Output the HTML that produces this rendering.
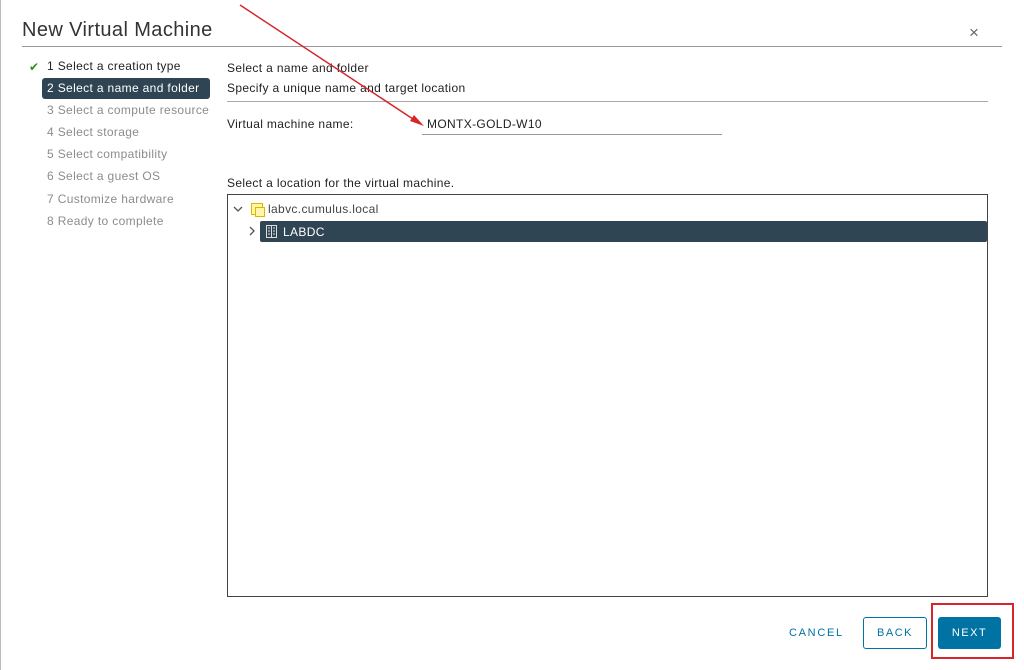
<!DOCTYPE html>
<html><head><style>
body{margin:0;width:1024px;height:670px;background:#fff;font-family:"Liberation Sans",sans-serif;position:relative;overflow:hidden;color:#333}
.a{position:absolute;white-space:nowrap}
.t{font-size:12px;letter-spacing:0.35px}
.s{font-size:12px;letter-spacing:0.35px;color:#8c8c8c;left:47px}
</style></head><body>
<div class="a" style="left:0;top:0;width:1px;height:670px;background:#bbb"></div>
<div class="a" style="left:22px;top:19px;font-size:20px;letter-spacing:0.4px;color:#333">New Virtual Machine</div>
<div class="a" style="left:969px;top:23px;font-size:17px;color:#666">×</div>
<div class="a" style="left:22px;top:46px;width:980px;height:1px;background:#999"></div>
<div class="a" style="left:29px;top:60px;font-size:12px;color:#2f8f1a">✔</div>
<div class="a t" style="left:47px;top:59px;color:#222">1 Select a creation type</div>
<div class="a" style="left:42px;top:78px;width:168px;height:21px;background:#2f4553;border-radius:3px"></div>
<div class="a t" style="left:47px;top:81px;color:#fff">2 Select a name and folder</div>
<div class="a s" style="top:103px">3 Select a compute resource</div>
<div class="a s" style="top:125px">4 Select storage</div>
<div class="a s" style="top:147px">5 Select compatibility</div>
<div class="a s" style="top:169px">6 Select a guest OS</div>
<div class="a s" style="top:192px">7 Customize hardware</div>
<div class="a s" style="top:214px">8 Ready to complete</div>
<div class="a t" style="left:227px;top:61px;color:#222">Select a name and folder</div>
<div class="a t" style="left:227px;top:81px;color:#222">Specify a unique name and target location</div>
<div class="a" style="left:227px;top:101px;width:761px;height:1px;background:#aaa"></div>
<div class="a t" style="left:227px;top:117px;color:#222">Virtual machine name:</div>
<div class="a t" style="left:427px;top:117px;color:#222">MONTX-GOLD-W10</div>
<div class="a" style="left:422px;top:134px;width:300px;height:1px;background:#999"></div>
<div class="a t" style="left:227px;top:176px;color:#222">Select a location for the virtual machine.</div>
<div class="a" style="left:227px;top:194px;width:759px;height:401px;border:1px solid #444"></div>
<svg class="a" style="left:232px;top:204px" width="12" height="10"><path d="M2 3 L6 7 L10 3" fill="none" stroke="#555" stroke-width="1.3"/></svg>
<div class="a" style="left:251px;top:203px;width:10px;height:10px;border:1px solid #d8b800;background:#fff6a8"></div>
<div class="a" style="left:255px;top:207px;width:8px;height:8px;border:1px solid #d8b800;background:#fff6a8"></div>
<div class="a t" style="left:268px;top:202px;color:#444">labvc.cumulus.local</div>
<svg class="a" style="left:247px;top:225px" width="10" height="12"><path d="M3 2 L7 6 L3 10" fill="none" stroke="#555" stroke-width="1.3"/></svg>
<div class="a" style="left:260px;top:221px;width:727px;height:21px;background:#2f4553;border-radius:2px"></div>
<svg class="a" style="left:265px;top:224px" width="13" height="15"><rect x="1.5" y="1.5" width="10" height="12" fill="none" stroke="#ddd"/><line x1="6.5" y1="1.5" x2="6.5" y2="13.5" stroke="#ddd"/><path d="M8 4h2M8 7h2M8 10h2M3 4h2M3 7h2M3 10h2" stroke="#ddd"/></svg>
<div class="a t" style="left:283px;top:225px;color:#fff">LABDC</div>
<div class="a" style="left:789px;top:627px;font-size:11px;color:#0072a3;letter-spacing:1.7px">CANCEL</div>
<div class="a" style="left:863px;top:617px;width:62px;height:30px;border:1px solid #0072a3;border-radius:3px;font-size:11px;color:#0072a3;letter-spacing:1.5px;text-align:center;line-height:30px">BACK</div>
<div class="a" style="left:938px;top:617px;width:63px;height:32px;background:#0072a3;border-radius:3px;font-size:11px;color:#fff;letter-spacing:1.5px;text-align:center;line-height:32px">NEXT</div>
<div class="a" style="left:931px;top:603px;width:79px;height:52px;border:2px solid #d6262a"></div>
<svg class="a" style="left:0;top:0" width="1024" height="670"><line x1="240" y1="5" x2="416" y2="121" stroke="#d6262a" stroke-width="1.5"/><polygon points="424,126 410,121 414,115" fill="#d6262a"/></svg>
</body></html>
